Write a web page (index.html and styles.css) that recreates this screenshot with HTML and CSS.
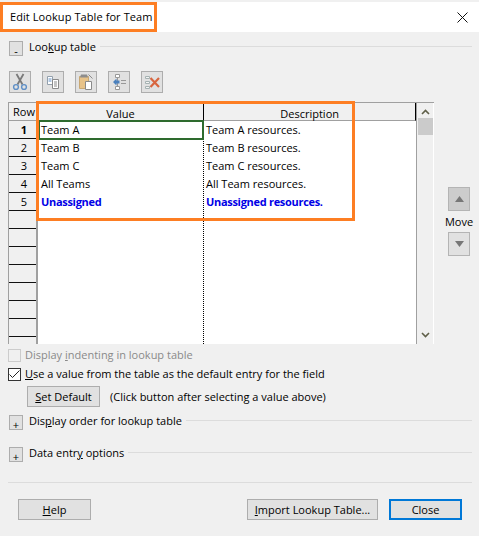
FILE: index.html
```html
<!DOCTYPE html>
<html lang="en">
<head>
<meta charset="utf-8">
<title>Edit Lookup Table for Team</title>
<link rel="stylesheet" href="styles.css">
</head>
<body>
<div class="dialog">
  <header class="titlebar">
    <span class="title">Edit Lookup Table for Team</span>
    <svg class="close-x" width="11" height="11" viewBox="0 0 11 11"><path d="M.5.500l10 10M10.500.500l-10 10" stroke="#111" stroke-width="1" fill="none"/></svg>
  </header>
  <div class="content">
    <div class="section section-first">
      <span class="toggle">-</span>
      <span class="section-label">Loo<u>k</u>up table</span>
      <span class="rule"></span>
    </div>
    <div class="toolbar">
      <span class="tool"><svg width="18" height="18" viewBox="0 0 18 18"><path d="M5.500 1l6 10.500M12.500 1l-6 10.500" stroke="#7a7a7a" stroke-width="1.800" fill="none"/><circle cx="5" cy="14" r="2.400" fill="none" stroke="#5f8fc6" stroke-width="1.400"/><circle cx="13" cy="14" r="2.400" fill="none" stroke="#5f8fc6" stroke-width="1.400"/></svg></span>
      <span class="tool"><svg width="18" height="18" viewBox="0 0 18 18"><path d="M3.500 3.500h5v8h-5z" fill="#fff" stroke="#93a0ad"/><path d="M8.500 6.500h6v9h-6z" fill="#fff" stroke="#8a8a8a"/><path d="M4.500 6h3M4.500 8h3" stroke="#5f8fc6"/><path d="M10 9h3M10 11h3M10 13h3" stroke="#8a8a8a"/></svg></span>
      <span class="tool"><svg width="18" height="18" viewBox="0 0 18 18"><path d="M2.500 3.500h9v12h-9z" fill="#e8c389" stroke="#c9a873"/><path d="M4 1.500h6l1 3H3z" fill="#8d8d8d"/><path d="M8.500 8.500h6v8h-6z" fill="#fff" stroke="#8a8a8a"/><path d="M11.500 1.500l4 4" stroke="#8a8a8a"/></svg></span>
      <span class="tool"><svg width="18" height="18" viewBox="0 0 18 18"><path d="M7.500 1.500v15" stroke="#999"/><path d="M5.500 1.500h4v3h-4zM5.500 13.500h4v3h-4z" fill="#fff" stroke="#999"/><path d="M3 9l3.500-3.500v2h3v3h-3v2z" fill="#4a80bd"/><path d="M11 7.500h5M11 10.500h5" stroke="#999" stroke-width="1.200"/></svg></span>
      <span class="tool"><svg width="18" height="18" viewBox="0 0 18 18"><path d="M2.500 3.500h4v2h-4zM2.500 8.500h4v2h-4zM2.500 13.500h4v2h-4z" fill="#f3f3f3" stroke="#a5b2b2"/><path d="M7.500 5l8.500 9M16 5l-8.500 9" stroke="#d8653f" stroke-width="2.200"/></svg></span>
    </div>
    <div class="grid-row">
      <div class="table">
        <div class="table-main">
          <div class="col col-row">
            <div class="head">Row</div>
            <div class="rowhead rowhead-active">1</div>
            <div class="rowhead">2</div>
            <div class="rowhead">3</div>
            <div class="rowhead">4</div>
            <div class="rowhead">5</div>
            <div class="rowhead"></div><div class="rowhead"></div><div class="rowhead"></div><div class="rowhead"></div><div class="rowhead"></div><div class="rowhead"></div><div class="rowhead"></div>
          </div>
          <div class="col col-value">
            <div class="head">Value</div>
            <div class="cell cell-active">Team A</div>
            <div class="cell">Team B</div>
            <div class="cell">Team C</div>
            <div class="cell">All Teams</div>
            <div class="cell cell-blue">Unassigned</div>
          </div>
          <div class="col col-desc">
            <div class="head">Description</div>
            <div class="cell">Team A resources.</div>
            <div class="cell">Team B resources.</div>
            <div class="cell">Team C resources.</div>
            <div class="cell">All Team resources.</div>
            <div class="cell cell-blue">Unassigned resources.</div>
          </div>
        </div>
        <div class="scrollbar">
          <svg width="9" height="6" viewBox="0 0 9 6"><path d="M1 5l3.500-3.500L8 5" stroke="#5f5f48" stroke-width="1.600" fill="none"/></svg>
          <span class="thumb"></span>
          <svg class="scroll-down" width="9" height="6" viewBox="0 0 9 6"><path d="M1 1l3.500 3.500L8 1" stroke="#5f5f48" stroke-width="1.600" fill="none"/></svg>
        </div>
      </div>
      <div class="move">
        <span class="move-btn move-up"><svg width="9" height="6" viewBox="0 0 9 6"><path d="M4.500 0L9 6H0z" fill="#777"/></svg></span>
        <span class="move-label">Move</span>
        <span class="move-btn move-down"><svg width="9" height="6" viewBox="0 0 9 6"><path d="M0 0h9L4.500 6z" fill="#777"/></svg></span>
      </div>
    </div>
    <div class="check check-disabled"><span class="box"></span><span>Display <u>i</u>ndenting in lookup table</span></div>
    <div class="check"><span class="box box-on"><svg width="11" height="9" viewBox="0 0 11 9"><path d="M.5 4.500l3 3 7-7" stroke="#222" stroke-width="1" fill="none"/></svg></span><span><u>U</u>se a value from the table as the default entry for the field</span></div>
    <div class="default-row"><span class="btn btn-default"><span><u>S</u>et Default</span></span><span>(Click button after selecting a value above)</span></div>
    <div class="section section-display">
      <span class="toggle toggle-plus">+</span>
      <span class="section-label">Dis<u>p</u>lay order for lookup table</span>
      <span class="rule"></span>
    </div>
    <div class="section section-entry">
      <span class="toggle toggle-plus">+</span>
      <span class="section-label">Data entr<u>y</u> options</span>
      <span class="rule"></span>
    </div>
    <div class="separator"></div>
    <div class="actions">
      <span class="btn btn-help"><span><u>H</u>elp</span></span>
      <span class="btn btn-import"><span><u>I</u>mport Lookup Table...</span></span>
      <span class="btn btn-close">Close</span>
    </div>
  </div>
  <div class="mark mark-title"></div>
  <div class="mark mark-table"></div>
</div>
</body>
</html>
```
FILE: styles.css
```css
* { box-sizing: border-box; }
html, body { margin: 0; padding: 0; }
body { background: #f0f0f0; }
.dialog {
  position: relative;
  width: 479px;
  height: 536px;
  overflow: hidden;
  background: #f0f0f0;
  font-family: "Open Sans", "Noto Sans", sans-serif;
  font-size: 11px;
  line-height: 16px;
  color: #000;
}
.titlebar {
  display: flex;
  align-items: center;
  justify-content: space-between;
  height: 30px;
  padding: 0 5px 0 10px;
  margin-top: 2px;
  background: #fff;
}
.title { font-size: 11px; letter-spacing: .08px; }
.close-x { margin-right: 6px; }
.content { padding: 9px 7px 0 8px; }
.section { display: flex; align-items: flex-start; height: 16px; }
.toggle {
  display: flex;
  align-items: center;
  justify-content: center;
  width: 14px;
  height: 15px;
  margin-left: 1px;
  padding-top: 3px;
  border: 1px solid #adadad;
  background: #e1e1e1;
  font-size: 11px;
  line-height: 1;
  flex: none;
}
.section-label { margin-left: 6px; margin-top: -2px; white-space: nowrap; }
.rule { flex: 1; height: 1px; margin-left: 4px; margin-top: 5px; background: #dcdcdc; }
.toolbar { display: flex; gap: 11px; padding: 14px 0 0 1px; }
.tool {
  display: flex;
  align-items: center;
  justify-content: center;
  width: 22px;
  height: 22px;
  border: 1px solid #adadad;
  background: #e1e1e1;
}
.grid-row { display: flex; margin-top: 9px; }
.table {
  display: flex;
  width: 426px;
  height: 242px;
  background: #fff;
  border-top: 1px solid #a0a0a0;
  border-left: 1px solid #a0a0a0;
  overflow: hidden;
}
.table-main { display: flex; width: 408px; border-right: 1px solid #a0a0a0; }
.col { flex: none; height: 100%; }
.col-row { width: 29px; background: #f0f0f0; border-right: 2px solid #a0a0a0; padding-left: 3px; }
.col-row .head, .col-row .rowhead { margin-left: -3px; padding-left: 3px; }
.col-value { width: 166px; border-right: 1px dotted #000; }
.col-desc { flex: 1; }
.head {
  height: 18px;
  padding-top: 3px;
  text-align: center;
  background: #f0f0f0;
  border-bottom: 1px solid #a0a0a0;
}
.col-row .head { padding-top: 1px; }
.col-value .head { border-right: 1px solid #000; margin-right: -1px; }
.col-desc .head { text-align: right; padding-right: 76px; border-right: 1px solid #000; }
.rowhead {
  height: 18px;
  text-align: center;
  border-bottom: 1px solid #111;
  line-height: 17px;
}
.rowhead-active { font-weight: 700; }
.cell { height: 18px; padding-left: 2px; line-height: 17px; white-space: nowrap; }
.col-value .cell { padding-left: 3px; }
.col-value .cell-active {
  position: relative;
  height: 20px;
  margin: -1px -1px -1px 0;
  padding-left: 1px;
  border: 2px solid #2e6b2e;
  line-height: 16px;
}
.cell-blue { color: #0000e6; font-weight: 700; letter-spacing: -.3px; }
.scrollbar {
  display: flex;
  flex-direction: column;
  align-items: center;
  width: 17px;
  padding-top: 6px;
  background: #f0f0f0;
  border-right: 1px solid #fff;
}
.thumb {
  width: 15px;
  height: 17px;
  margin-top: 3px;
  background: #cbcbcb;
}
.scroll-down { margin-top: auto; margin-bottom: 6px; }
.move {
  display: flex;
  flex-direction: column;
  align-items: center;
  width: 24px;
  margin-left: 13px;
  padding-top: 85px;
}
.move-btn {
  display: flex;
  align-items: center;
  justify-content: center;
  width: 22px;
  height: 24px;
  border: 1px solid #b4b4b4;
  flex: none;
}
.move-up { background: #cccccc; }
.move-down { background: #e1e1e1; }
.move-label { height: 21px; line-height: 22px; }
.check { display: flex; align-items: center; gap: 4px; height: 16px; }
.check-disabled { margin-top: 3px; color: #8a8a8a; }
.check + .check { margin-top: 3px; }
.box {
  display: flex;
  align-items: center;
  justify-content: center;
  width: 13px;
  height: 13px;
  flex: none;
  border: 1px solid #cccccc;
  background: #f0f0f0;
}
.box-on { border-color: #333; background: #fff; }
.btn {
  display: flex;
  align-items: center;
  justify-content: center;
  height: 21px;
  border: 1px solid #adadad;
  background: #e1e1e1;
  white-space: nowrap;
}
.default-row { display: flex; align-items: center; gap: 10px; margin: 4px 0 0 19px; }
.btn-default { width: 73px; }
.section-display { margin-top: 8px; }
.section-entry { margin-top: 16px; }
.separator { height: 1px; margin-top: 19px; background: #dcdcdc; }
.actions { display: flex; margin: 16px 10px 0 10px; }
.btn-help { width: 73px; }
.btn-import { width: 131px; margin-left: auto; }
.btn-close { width: 73px; margin-left: 11px; border: 2px solid #0078d7; }
.mark { position: absolute; border: 3px solid #fd7e23; pointer-events: none; }
.mark-title { left: 0; top: 2px; width: 157px; height: 30px; }
.mark-table { left: 36px; top: 101px; width: 319px; height: 120px; }
```
